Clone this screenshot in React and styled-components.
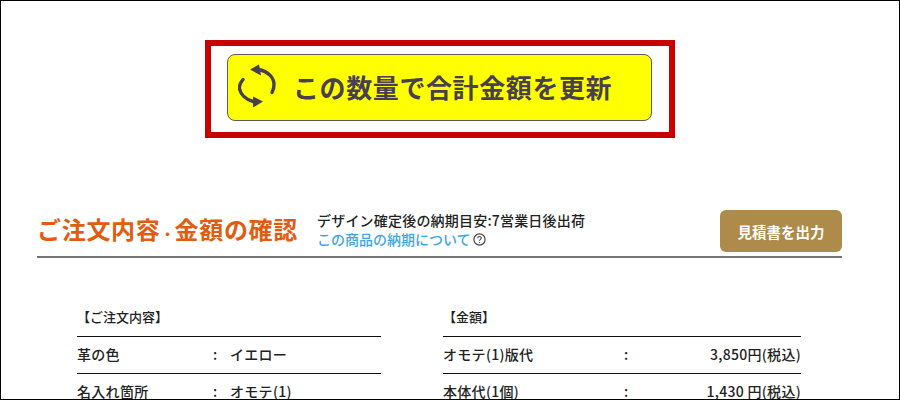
import React from 'react';
import styled, { createGlobalStyle } from 'styled-components';

const GlobalStyle = createGlobalStyle`
  html, body {
    margin: 0;
    padding: 0;
    background: #fff;
  }
  * {
    box-sizing: border-box;
  }
`;

const Page = styled.div`
  width: 900px;
  height: 400px;
  overflow: hidden;
  border: 1px solid #000;
  background: #fff;
  font-family: 'Noto Sans CJK JP', 'Noto Sans', sans-serif;
  color: #222;
  padding: 39px 57px 0 36px;
`;

const Highlight = styled.div`
  width: 470px;
  height: 98px;
  margin-left: 168px;
  border: 6px solid #c80000;
  padding: 8px 0 0 16px;
`;

const UpdateButton = styled.button`
  display: flex;
  align-items: center;
  width: 425px;
  height: 67px;
  padding: 0 0 0 10px;
  border: 1px solid #5f5a64;
  border-radius: 8px;
  background: #ffff00;
  color: #483f50;
  font-family: inherit;
  font-size: 26px;
  font-weight: 700;
  line-height: 1;
`;

const UpdateLabel = styled.span`
  margin: 0 0 2px 17px;
  letter-spacing: 0.6px;
`;

const Header = styled.div`
  display: flex;
  align-items: flex-start;
  height: 47px;
  margin-top: 73px;
  border-bottom: 2px solid #77727a;
  width: 805px;
`;

const Title = styled.h2`
  margin: 1px 0 0 0;
  color: #e25c0f;
  font-size: 24px;
  font-weight: 700;
  letter-spacing: 0.7px;
  line-height: 34px;
  white-space: nowrap;
`;

const TitleDot = styled.span`
  font-size: 14px;
  letter-spacing: 0;
`;

const Notes = styled.div`
  margin: 0 0 0 19px;
  font-size: 14px;
  font-weight: 500;
  line-height: 19px;
  flex: 1;
`;

const LeadTime = styled.div`
  color: #222;
  letter-spacing: 0.2px;
`;

const LeadLink = styled.a`
  display: flex;
  align-items: center;
  gap: 2px;
  color: #3ea6e8;
`;

const QuoteButton = styled.button`
  width: 122px;
  height: 42px;
  margin-top: -1px;
  border: 0;
  border-radius: 6px;
  background: #ae8a4b;
  color: #fff;
  font-family: inherit;
  font-size: 14.5px;
  font-weight: 700;
`;

const Columns = styled.div`
  display: flex;
  margin: 50px 0 0 40px;
  gap: 62px;
`;

const Column = styled.section`
  width: ${(p) => p.$width}px;
`;

const Heading = styled.div`
  height: 29px;
  font-size: 13px;
  font-weight: 500;
  line-height: 18px;
  border-bottom: 1px solid #111;
`;

const Row = styled.div`
  display: grid;
  grid-template-columns: ${(p) => p.$cols};
  align-items: center;
  height: 37px;
  padding-bottom: 3px;
  font-size: 14px;
  font-weight: 500;
  letter-spacing: 0.3px;
  border-bottom: 1px solid #111;
  white-space: nowrap;
`;

const Value = styled.span`
  text-align: ${(p) => (p.$right ? 'right' : 'left')};
`;

function SyncIcon() {
  return (
    <svg width="38" height="48" viewBox="0 1.5 38 48" fill="none">
      <path d="M21 7 C30 9 36 15 36 22 C36 25 35.5 27.5 34 30" stroke="#483f50" strokeWidth="3.4" strokeLinecap="round" />
      <path d="M12 7 L21 2 L23 13 Z" fill="#483f50" />
      <path d="M5 17 C2.5 20 1 23 1.5 26 C2.5 32 8 37 15 39" stroke="#483f50" strokeWidth="3.4" strokeLinecap="round" />
      <path d="M25 39 L15 34 L15 45 Z" fill="#483f50" />
    </svg>
  );
}

function HelpIcon() {
  return (
    <svg width="13" height="13" viewBox="0 0 13 13" fill="none">
      <circle cx="6.5" cy="6.5" r="5.6" stroke="#444" strokeWidth="1.2" />
      <path d="M4.7 5.2 C4.7 3 8.3 3 8.3 5.1 C8.3 6.4 6.5 6.3 6.5 7.8" stroke="#444" strokeWidth="1.1" fill="none" />
      <circle cx="6.5" cy="9.6" r="0.7" fill="#444" />
    </svg>
  );
}

const orderRows = [
  { label: '革の色', value: 'イエロー' },
  { label: '名入れ箇所', value: 'オモテ(1)' },
];

const priceRows = [
  { label: 'オモテ(1)版代', value: '3,850円(税込)' },
  { label: '本体代(1個)', value: '1,430 円(税込)' },
];

function App() {
  return (
    <Page>
      <GlobalStyle />
      <Highlight>
        <UpdateButton>
          <SyncIcon />
          <UpdateLabel>この数量で合計金額を更新</UpdateLabel>
        </UpdateButton>
      </Highlight>
      <Header>
        <Title>
          ご注文内容<TitleDot>・</TitleDot>金額の確認
        </Title>
        <Notes>
          <LeadTime>デザイン確定後の納期目安:7営業日後出荷</LeadTime>
          <LeadLink>
            この商品の納期について
            <HelpIcon />
          </LeadLink>
        </Notes>
        <QuoteButton>見積書を出力</QuoteButton>
      </Header>
      <Columns>
        <Column $width={304}>
          <Heading>【ご注文内容】</Heading>
          {orderRows.map((row) => (
            <Row key={row.label} $cols="136px 17px 1fr">
              <span>{row.label}</span>
              <span>:</span>
              <Value>{row.value}</Value>
            </Row>
          ))}
        </Column>
        <Column $width={358}>
          <Heading>【金額】</Heading>
          {priceRows.map((row) => (
            <Row key={row.label} $cols="181px 30px 1fr">
              <span>{row.label}</span>
              <span>:</span>
              <Value $right>{row.value}</Value>
            </Row>
          ))}
        </Column>
      </Columns>
    </Page>
  );
}

export default App;
